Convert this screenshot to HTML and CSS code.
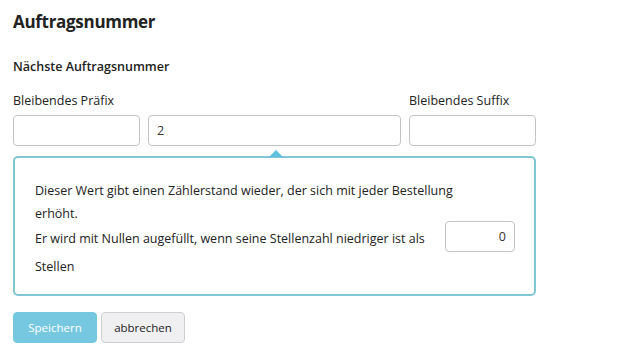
FILE: index.html
```html
<!DOCTYPE html>
<html lang="de">

<head>
  <meta http-equiv="Content-Type" content="text/html; charset=UTF-8">
  <title>Auftragsnummer</title>
  <link rel="stylesheet" href="styles.css">
</head>

<body>
  <h1 class="page-title">Auftragsnummer</h1>
  <h2 class="section-title">Nächste Auftragsnummer</h2>

  <div class="number-grid">
    <label class="field-label" for="prefix">Bleibendes Präfix</label>
    <span></span>
    <label class="field-label" for="suffix">Bleibendes Suffix</label>
    <input class="text-input" id="prefix" type="text" value="">
    <input class="text-input" id="counter" type="text" value="2">
    <input class="text-input" id="suffix" type="text" value="">
  </div>

  <div class="hint-box">
    <span class="hint-arrow"></span>
    <p class="hint-text">Dieser Wert gibt einen Zählerstand wieder, der sich mit jeder Bestellung erhöht.</p>
    <p class="hint-text"><span class="no-wrap">Er wird mit Nullen augefüllt, wenn seine Stellenzahl niedriger ist als<input class="text-input digits" type="text" value="0"></span><br>
      Stellen</p>
  </div>

  <div class="actions">
    <button class="btn btn-save" type="button">Speichern</button>
    <button class="btn btn-cancel" type="button">abbrechen</button>
  </div>
</body>

</html>
```

FILE: styles.css
```css
body {
  font-family: "Open Sans", "Noto Sans", sans-serif;
  font-size: 12.5px;
  color: #222;
  background: #fff;
  margin: 0;
  padding: 8px 13px;
}

.page-title {
  font-size: 17px;
  font-weight: 700;
  letter-spacing: -0.3px;
  margin: 0;
  line-height: 28px;
}

.section-title {
  font-size: 12.5px;
  font-weight: 600;
  margin: 22px 0 0;
  line-height: 18px;
}

.number-grid {
  display: grid;
  grid-template-columns: 127px 253px 127px;
  column-gap: 8px;
  row-gap: 5px;
  margin-top: 16px;
  width: 523px;
}

.field-label {
  line-height: 18px;
}

.text-input {
  box-sizing: border-box;
  height: 31px;
  border: 1px solid #c4c4c4;
  border-radius: 4px;
  padding: 0 8px;
  font-family: inherit;
  font-size: 12.5px;
  color: #333;
  width: 100%;
}

.hint-box {
  position: relative;
  box-sizing: border-box;
  width: 523px;
  height: 140px;
  margin-top: 10px;
  border: 2px solid #80c6d3;
  border-radius: 5px;
  padding: 21px 20px;
}

.hint-arrow {
  position: absolute;
  top: -8px;
  left: 254px;
  width: 0;
  height: 0;
  border-left: 7px solid transparent;
  border-right: 7px solid transparent;
  border-bottom: 7px solid #5fc1df;
}

.hint-text {
  margin: 0;
  line-height: 23px;
}

.hint-text:first-of-type {
  max-width: 450px;
}

.no-wrap {
  white-space: nowrap;
}

.text-input.digits {
  width: 70px;
  text-align: right;
  vertical-align: middle;
  margin: -4px 0 3px 20px;
}

.actions {
  display: flex;
  gap: 4px;
  margin-top: 16px;
}

.btn {
  height: 31px;
  width: 84px;
  border-radius: 4px;
  font-family: inherit;
  font-size: 11.5px;
  cursor: pointer;
}

.btn-save {
  background: #76c8e0;
  border: 1px solid #76c8e0;
  color: #fff;
}

.btn-cancel {
  background: #f0f0f2;
  border: 1px solid #cfcfd3;
  color: #222;
}
```
